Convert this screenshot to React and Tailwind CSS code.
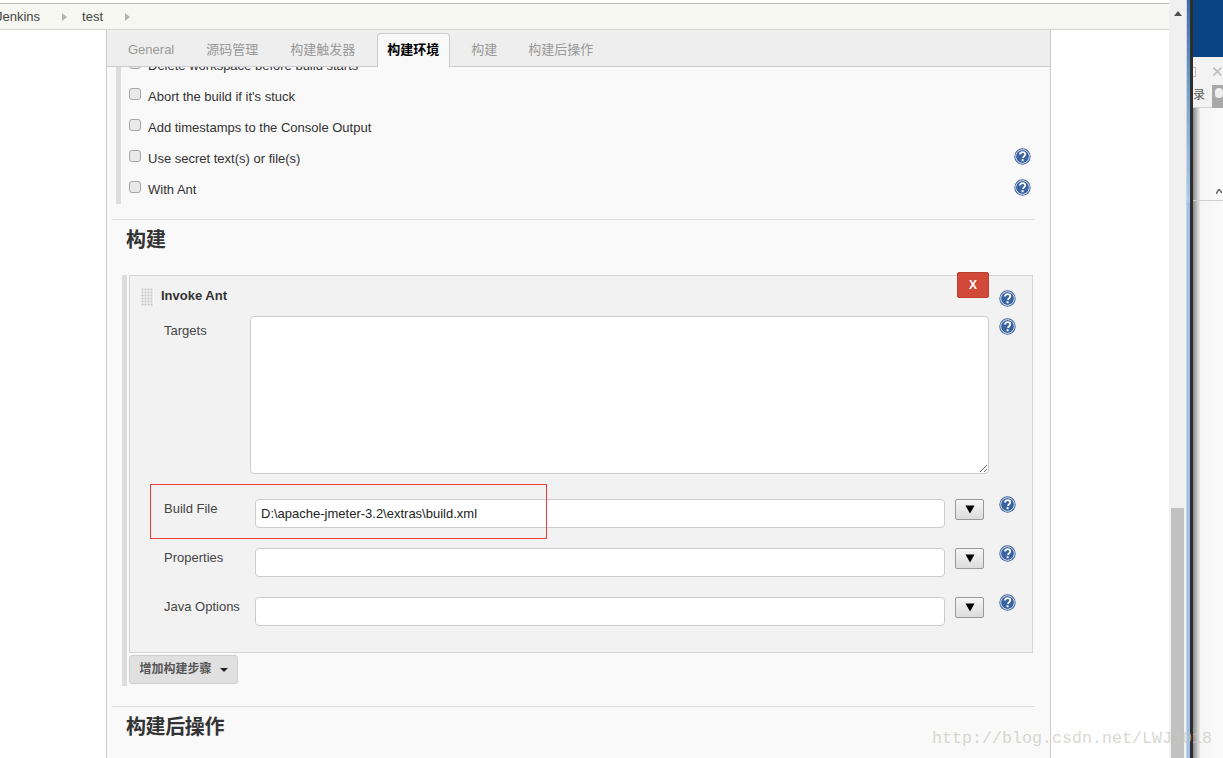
const font = { fontFamily: '"Liberation Sans","Noto Sans CJK SC",Arial,sans-serif' };

function Help({ className = "" }) {
  return (
    <svg width="17" height="17" viewBox="0 0 17 17" className={className}>
      <circle cx="8.5" cy="8.5" r="8.2" fill="#3f659f" />
      <circle cx="8.5" cy="8.5" r="6.8" fill="none" stroke="#e6ecf5" strokeWidth="1" />
      <circle cx="8.5" cy="8.5" r="6" fill="#3a649f" />
      <path d="M5.9 6.5c.2-1.6 1.3-2.4 2.7-2.4 1.6 0 2.6.9 2.6 2.2 0 1-.5 1.6-1.3 2.1-.6.4-.8.8-.8 1.6" fill="none" stroke="#fff" strokeWidth="1.8" />
      <rect x="7.6" y="11.2" width="2" height="2" fill="#fff" />
    </svg>
  );
}

function Check({ label, help }) {
  return (
    <div className="h-[31px] flex items-center relative">
      <span className="w-[12px] h-[12px] ml-[8px] mr-[7px] -mt-[5px] rounded-[3px] border border-[#a6a6a6] bg-[#e9e9e9] shrink-0" />
      <span className="text-[13px] text-[#333] flex-1 whitespace-nowrap">{label}</span>
      {help && <Help className="mr-[19px] -mt-[5px]" />}
    </div>
  );
}

function Grip() {
  const dots = [];
  for (let y = 0; y < 6; y++) for (let x = 0; x < 4; x++) dots.push(<rect key={x + "-" + y} x={x * 3 + 0.5} y={y * 3 + 0.5} width="2" height="2" fill="#c4c4c4" />);
  return <svg width="13" height="18" className="bg-[#f8f8f8] mt-[2px]">{dots}</svg>;
}

function Field({ label, value, top }) {
  return (
    <div className={"flex items-start " + top}>
      <div className="w-[91px] pl-[34px] pt-[1px] text-[13px] leading-[18px] text-[#444] shrink-0 whitespace-nowrap">{label}</div>
      <div className="w-[690px] h-[29px] ml-[34px] border border-[#ccc] rounded-[4px] bg-white text-[13px] text-[#222] pl-[5px] flex items-center shrink-0">{value}</div>
      <button className="ml-[10px] w-[29px] h-[21px] border border-[#999] rounded-[2px] bg-gradient-to-b from-[#f6f6f6] to-[#dcdcdc] flex items-center justify-center shrink-0">
        <svg width="10" height="9" viewBox="0 0 10 9"><path d="M0.5 0.5H9.5L5 8.5Z" fill="#000" /></svg>
      </button>
      <Help className="ml-[15px] -mt-[3px]" />
    </div>
  );
}

function Tab({ children, active }) {
  if (active)
    return (
      <div className="h-[34px] pl-[9px] pr-[10px] pb-[2px] mt-[3px] -mb-px bg-[#f9f9f9] border border-b-0 border-[#ccc] rounded-t-[4px] flex items-center text-[13px] font-bold text-black">{children}</div>
    );
  return <div className="px-[10px] pt-[4px] h-[36px] flex items-center text-[13px] text-[#999] mr-[12px]">{children}</div>;
}

export default function App() {
  return (
    <div style={font} className="relative flex w-[1223px] h-[758px] overflow-hidden bg-white">
      {/* main page */}
      <div className="w-[1169px] h-full flex flex-col shrink-0 overflow-hidden">
        <div className="h-[3px] shrink-0 bg-white" />
        <div className="h-[27px] shrink-0 bg-[#f5f7f0] border-t border-b border-t-[#bdbdbd] border-b-[#d3d3d3] flex items-center text-[13px] text-[#444] overflow-hidden">
          <span className="-ml-[4px]">Jenkins</span>
          <svg width="5" height="8" className="ml-[22px]"><path d="M0 0L5 4L0 8Z" fill="#b5b5b5" /></svg>
          <span className="ml-[15px]">test</span>
          <svg width="5" height="8" className="ml-[22px]"><path d="M0 0L5 4L0 8Z" fill="#b5b5b5" /></svg>
        </div>
        <div className="ml-[106px] w-[945px] flex-1 border-l border-r border-[#ccc] bg-[#f9f9f9] flex flex-col overflow-hidden">
          <div className="h-[37px] shrink-0 bg-[#eeeeee] border-b border-[#ccc] flex pl-[11px]">
            <Tab>General</Tab>
            <Tab>源码管理</Tab>
            <Tab>构建触发器</Tab>
            <div className="mr-[11px]"><Tab active>构建环境</Tab></div>
            <Tab>构建</Tab>
            <div className="-ml-[1px]"><Tab>构建后操作</Tab></div>
          </div>
          <div className="flex-1 overflow-hidden relative">
            <div className="ml-[9px] w-[5px] bg-[#dddddd] h-[137px] absolute top-0" />
            <div className="ml-[14px] -mt-[17px]">
              <Check label="Delete workspace before build starts" />
              <Check label="Abort the build if it's stuck" />
              <Check label="Add timestamps to the Console Output" />
              <Check label="Use secret text(s) or file(s)" help />
              <Check label="With Ant" help />
            </div>
            <div className="ml-[5px] w-[923px] mt-[14px] border-t border-[#ddd]" />
            <h2 className="ml-[19px] mt-[7px] text-[20px] leading-[26px] font-bold text-[#333]">构建</h2>

            <div className="ml-[15px] mt-[22px] w-[911px] border-l-[5px] border-[#dddddd] pl-[2px] pb-[2px] relative">
              <div className="w-[904px] h-[378px] border border-[#d5d5d5] bg-[#f2f2f2] flex flex-col">
                <div className="h-[40px] shrink-0 flex items-center pl-[11px]">
                  <Grip />
                  <span className="ml-[7px] text-[13px] font-bold text-[#333]">Invoke Ant</span>
                </div>
                <div className="flex items-start">
                  <div className="w-[120px] pl-[34px] pt-[6px] text-[13px] leading-[18px] text-[#444] shrink-0">Targets</div>
                  <textarea readOnly className="w-[739px] h-[158px] border border-[#ccc] rounded-[4px] bg-white shrink-0" />
                  <Help className="ml-[10px] mt-[2px]" />
                </div>
                <Field label="Build File" value="D:\apache-jmeter-3.2\extras\build.xml" top="mt-[25px]" />
                <Field label="Properties" value="" top="mt-[20px]" />
                <Field label="Java Options" value="" top="mt-[20px]" />
              </div>
              <button className="mt-[2px] w-[109px] h-[29px] pb-[2px] border border-[#cfcfcf] rounded-[3px] bg-[#e0e0e0] flex items-center justify-center text-[12px] font-bold text-[#555]">
                增加构建步骤
                <svg width="8" height="4" className="ml-[8px] mt-[2px]"><path d="M0 0H8L4 4Z" fill="#222" /></svg>
              </button>
              <div className="absolute left-[830px] -top-[3px] w-[32px] h-[26px] bg-[#d24939] border border-[#bd3f30] rounded-[2px] text-white text-[12px] font-bold flex items-center justify-center">X</div>
              <Help className="absolute left-[872px] top-[15px]" />
            </div>
            <div className="ml-[5px] w-[923px] mt-[20px] border-t border-[#ddd]" />
            <h2 className="ml-[19px] mt-[7px] text-[20px] leading-[26px] font-bold text-[#333] tracking-[-0.4px]">构建后操作</h2>
          </div>
        </div>
      </div>

      {/* page scrollbar */}
      <div className="w-[17px] h-full bg-[#f0f0f0] flex flex-col items-center shrink-0 pt-[11px]">
        <svg width="8" height="5" className="shrink-0"><path d="M0 5L4 0L8 5Z" fill="#505050" /></svg>
        <div className="w-[13px] h-[250px] bg-[#c1c1c1] mt-auto" />
      </div>

      {/* window edge */}
      <div className="w-[1px] h-full bg-[#d0d6dc] shrink-0" />
      <div className="w-[3px] h-full shrink-0 flex flex-col">
        <div className="h-[203px] bg-gradient-to-b from-[#3b6ea5] via-[#7aa4cf] to-[#a9cdee]" />
        <div className="flex-1 bg-[#9cc0e6]" />
      </div>
      <div className="w-[3px] h-full shrink-0 bg-[#2e2e2e]" />

      {/* neighbouring window */}
      <div className="flex-1 h-full flex flex-col overflow-hidden bg-gradient-to-r from-[#8a8a8a] from-0% via-[#f5f5f5] via-25% to-[#fbfbfb]">
        <div className="h-[57px] shrink-0 bg-[#0a4484]" />
        <div className="h-[51px] shrink-0 bg-[#f3f3f3] border-b border-[#d0d0d0] relative text-[12px] text-[#555]">
          <div className="absolute left-0 top-[10px] w-[3px] h-[10px] border border-l-0 border-[#bbb]" />
          <span className="absolute left-0 top-[29px]">录</span>
          <span className="absolute right-0 top-[5px] text-[15px] leading-[20px] w-[12px] overflow-hidden text-[#bbb]">✕</span>
          <div className="absolute left-[19px] top-[28px] w-[11px] h-[23px] bg-[#a8a8a8] flex justify-end"><div className="w-[8px] h-[10px] mt-[3px] bg-[#efefef] rounded-full" /></div>
        </div>
        <div className="h-[93px] shrink-0 border-b border-[#d0d0d0] flex items-end justify-end pr-[1px] pb-[6px]">
          <svg width="6" height="5"><path d="M0 5L3 0L6 4" stroke="#666" fill="none" strokeWidth="1.5" /></svg>
        </div>
      </div>

      {/* annotation */}
      <div className="absolute left-[150px] top-[484px] w-[397px] h-[55px] border border-[#f03a3a] pointer-events-none" />
      {/* watermark */}
      <div className="absolute left-[932px] top-[728px] text-[16.67px] leading-[22px] text-[#c9c9c0] opacity-70 whitespace-nowrap pointer-events-none" style={{ fontFamily: '"Liberation Mono",monospace' }}>http://blog.csdn.net/LWJ1018</div>
    </div>
  );
}
